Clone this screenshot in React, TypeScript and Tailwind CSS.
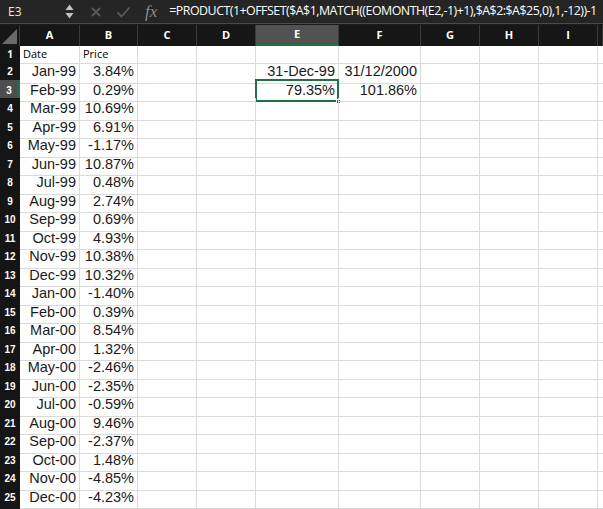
const cols = ["A", "B", "C", "D", "E", "F", "G", "H", "I", ""];

const data: [string, string][] = [
  ["Jan-99", "3.84%"],
  ["Feb-99", "0.29%"],
  ["Mar-99", "10.69%"],
  ["Apr-99", "6.91%"],
  ["May-99", "-1.17%"],
  ["Jun-99", "10.87%"],
  ["Jul-99", "0.48%"],
  ["Aug-99", "2.74%"],
  ["Sep-99", "0.69%"],
  ["Oct-99", "4.93%"],
  ["Nov-99", "10.38%"],
  ["Dec-99", "10.32%"],
  ["Jan-00", "-1.40%"],
  ["Feb-00", "0.39%"],
  ["Mar-00", "8.54%"],
  ["Apr-00", "1.32%"],
  ["May-00", "-2.46%"],
  ["Jun-00", "-2.35%"],
  ["Jul-00", "-0.59%"],
  ["Aug-00", "9.46%"],
  ["Sep-00", "-2.37%"],
  ["Oct-00", "1.48%"],
  ["Nov-00", "-4.85%"],
  ["Dec-00", "-4.23%"],
];

const grid = "grid grid-cols-[20px_60px_58px_59px_59px_83px_82px_59px_59px_59px_1fr]";

function Cell({ children, left, selected }: { children?: React.ReactNode; left?: boolean; selected?: boolean }) {
  return (
    <div
      className={`relative flex items-center border-r border-b border-[#dadada] px-[3px] overflow-visible whitespace-nowrap ${
        left ? "justify-start" : "justify-end"
      }`}
    >
      {selected && (
        <div className="absolute -left-px -top-px -right-px -bottom-px border-2 border-[#1f7244]">
          <div className="absolute -right-[4px] -bottom-[4px] h-[5px] w-[5px] bg-[#1f7244] border border-white" />
        </div>
      )}
      <span className="relative">{children}</span>
    </div>
  );
}

function RowHead({ n, active }: { n: number; active?: boolean }) {
  return (
    <div
      className={`flex items-center justify-center border-b border-[#3a3a3a] text-[10px] font-bold text-white ${
        active ? "bg-[#4e4e4e] border-r-2 border-r-[#1f7244]" : "bg-[#151515]"
      }`}
    >
      {n}
    </div>
  );
}

export default function App() {
  const rows: React.ReactNode[][] = [];
  for (let r = 2; r <= 26; r++) {
    const d = data[r - 2];
    const cells: React.ReactNode[] = [d ? d[0] : "", d ? d[1] : "", "", ""];
    cells.push(r === 2 ? "31-Dec-99" : r === 3 ? "79.35%" : "");
    cells.push(r === 2 ? "31/12/2000" : r === 3 ? "101.86%" : "");
    cells.push("", "", "", "");
    rows.push(cells);
  }

  return (
    <div className="h-[509px] w-[603px] overflow-hidden bg-white font-['Liberation_Sans',Arial,sans-serif]">
      {/* formula bar */}
      <div className="flex h-[23px] items-center bg-[#252525] text-[#e8e8e8]">
        <div className="flex h-full w-[82px] items-center justify-between pl-[8px] pr-[8px]">
          <span className="font-['Open_Sans',sans-serif] text-[12px]">E3</span>
          <svg width="9" height="15" viewBox="0 0 9 15">
            <path d="M4.5 0.5L8.5 6H0.5Z" fill="#c4c4c4" />
            <path d="M4.5 14.5L8.5 9H0.5Z" fill="#c4c4c4" />
          </svg>
        </div>
        <div className="flex items-center gap-[14px] pl-[8px]">
          <svg width="12" height="12" viewBox="0 0 12 12">
            <path d="M2 2L10 10M10 2L2 10" stroke="#5a5a5a" strokeWidth="1.8" />
          </svg>
          <svg width="15" height="12" viewBox="0 0 15 12">
            <path d="M1.5 6.5L5.5 10.5L13.5 1.5" stroke="#5a5a5a" strokeWidth="1.8" fill="none" />
          </svg>
          <span className="font-['Liberation_Serif',serif] text-[17px] italic leading-none text-[#8a8a8a]">fx</span>
        </div>
        <div className="ml-[10px] flex h-full flex-1 items-center whitespace-nowrap pl-[2px] font-['Open_Sans',sans-serif] text-[12.4px] tracking-[-0.5px] text-white">
          =PRODUCT(1+OFFSET($A$1,MATCH((EOMONTH(E2,-1)+1),$A$2:$A$25,0),1,-12))-1
        </div>
      </div>
      <div className="h-[1px] bg-[#4a4a4a]" />
      <div className="h-[1px] bg-[#1a1a1a]" />

      {/* column headers */}
      <div className={`${grid} h-[21px] bg-[#161616]`}>
        <div className="relative border-r border-[#3a3a3a]">
          <svg className="absolute bottom-[2px] right-[2px]" width="15" height="15" viewBox="0 0 15 15">
            <path d="M15 0V15H0Z" fill="#6a6a6a" />
          </svg>
        </div>
        {cols.map((c, i) => (
          <div
            key={i}
            className={`flex items-center justify-center border-r border-[#3a3a3a] font-['Open_Sans',sans-serif] text-[11px] font-bold text-white ${
              c === "E" ? "bg-[#525252] border-b-2 border-b-[#1f7244]" : ""
            }`}
          >
            {c}
          </div>
        ))}
      </div>

      {/* row 1 */}
      <div className={`${grid} h-[15px] text-[11px] text-black font-['Open_Sans',sans-serif]`}>
        <RowHead n={1} />
        <Cell left>Date</Cell>
        <Cell left>Price</Cell>
        {Array.from({ length: 8 }).map((_, i) => (
          <Cell key={i} />
        ))}
      </div>

      {rows.map((cells, ri) => {
        const r = ri + 2;
        return (
          <div key={r} className={`${grid} h-[18.5px] text-[14.5px] text-[#1a1a1a]`}>
            <RowHead n={r} active={r === 3} />
            {cells.map((v, ci) => (
              <Cell key={ci} selected={r === 3 && ci === 4}>
                {v}
              </Cell>
            ))}
          </div>
        );
      })}
    </div>
  );
}
